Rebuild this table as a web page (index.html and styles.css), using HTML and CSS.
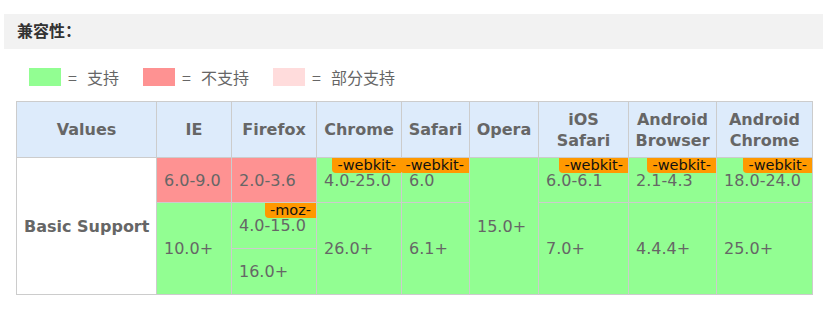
FILE: index.html
```html
<!DOCTYPE html>
<html lang="zh">
<head>
<meta charset="utf-8">
<title>兼容性</title>
<link rel="stylesheet" href="styles.css">
</head>
<body>
<section class="section">
  <h3 class="title">兼容性：</h3>
  <div class="legend">
    <span class="legend-item"><span class="swatch sw-yes"></span><span class="eq">=</span>支持</span>
    <span class="legend-item"><span class="swatch sw-no"></span><span class="eq">=</span>不支持</span>
    <span class="legend-item"><span class="swatch sw-part"></span><span class="eq">=</span>部分支持</span>
  </div>
  <table class="compat">
    <colgroup>
      <col class="c-values"><col class="c-ie"><col class="c-ff"><col class="c-ch"><col class="c-sa"><col class="c-op"><col class="c-ios"><col class="c-ab"><col class="c-ac">
    </colgroup>
    <thead>
      <tr class="head-row">
        <th>Values</th><th>IE</th><th>Firefox</th><th>Chrome</th><th>Safari</th><th>Opera</th><th>iOS<br>Safari</th><th>Android<br>Browser</th><th>Android<br>Chrome</th>
      </tr>
    </thead>
    <tbody>
      <tr class="r1">
        <th class="feature" rowspan="3">Basic Support</th>
        <td class="no">6.0-9.0</td>
        <td class="no">2.0-3.6</td>
        <td class="yes"><span class="prefix">-webkit-</span>4.0-25.0</td>
        <td class="yes"><span class="prefix">-webkit-</span>6.0</td>
        <td class="yes" rowspan="3">15.0+</td>
        <td class="yes"><span class="prefix">-webkit-</span>6.0-6.1</td>
        <td class="yes"><span class="prefix">-webkit-</span>2.1-4.3</td>
        <td class="yes"><span class="prefix">-webkit-</span>18.0-24.0</td>
      </tr>
      <tr class="r2">
        <td class="yes" rowspan="2">10.0+</td>
        <td class="yes"><span class="prefix">-moz-</span>4.0-15.0</td>
        <td class="yes" rowspan="2">26.0+</td>
        <td class="yes" rowspan="2">6.1+</td>
        <td class="yes" rowspan="2">7.0+</td>
        <td class="yes" rowspan="2">4.4.4+</td>
        <td class="yes" rowspan="2">25.0+</td>
      </tr>
      <tr class="r3">
        <td class="yes">16.0+</td>
      </tr>
    </tbody>
  </table>
</section>
</body>
</html>
```
FILE: styles.css
```css
html, body {
  margin: 0;
  padding: 0;
  background: #fff;
}
body {
  font-family: "DejaVu Sans", Verdana, "Noto Sans CJK SC", sans-serif;
  color: #666;
}
.section {
  padding: 14px 0 0 4px;
}
.title {
  margin: 0;
  height: 35px;
  line-height: 35px;
  padding-left: 13px;
  background: #f2f2f2;
  font-family: "DejaVu Sans", "Noto Sans CJK SC", sans-serif;
  font-size: 16px;
  font-weight: bold;
  color: #333;
}
.legend {
  display: flex;
  align-items: center;
  padding: 19px 0 0 25px;
  height: 18px;
  font-family: "Noto Sans CJK SC", sans-serif;
  font-size: 16px;
  color: #666;
}
.legend-item {
  display: flex;
  align-items: center;
  margin-right: 24px;
  line-height: 18px;
}
.swatch {
  display: inline-block;
  width: 32px;
  height: 18px;
  margin-right: 7px;
}
.eq {
  display: inline-block;
  width: 19px;
}
.sw-yes { background: #92fe92; }
.sw-no { background: #fe9292; }
.sw-part { background: #ffdcdc; }

.compat {
  margin: 15px 0 0 12px;
  border-collapse: collapse;
  table-layout: fixed;
  width: 797px;
  border: 1px solid #ccc;
  font-size: 16px;
}
.c-values { width: 140px; }
.c-ie { width: 75px; }
.c-ff { width: 85px; }
.c-ch { width: 85px; }
.c-sa { width: 68px; }
.c-op { width: 69px; }
.c-ios { width: 90px; }
.c-ab { width: 88px; }
.c-ac { width: 96px; }

.compat th, .compat td {
  border: 1px solid #ccc;
  padding: 0 0 0 7px;
  vertical-align: middle;
}
.head-row th {
  background: #ddebfb;
  color: #666;
  font-weight: bold;
  text-align: center;
  line-height: 21px;
  height: 55px;
  padding: 0;
}
.feature {
  background: #fff;
  color: #666;
  font-weight: bold;
  text-align: left;
  padding-left: 7px;
}
.compat td {
  position: relative;
  color: #666;
  white-space: nowrap;
}
.r1 td, .r1 th { height: 44px; }
.r2 td { height: 45px; }
.r3 td { height: 45px; }
.yes { background: #92fe92; }
.no { background: #fe9292; }
.part { background: #ffdcdc; }
.prefix {
  position: absolute;
  top: 0;
  right: 0;
  background: #ff9900;
  color: #111;
  font-size: 14.5px;
  line-height: 15px;
  padding: 0 5px;
  border-bottom-left-radius: 4px;
}
```
